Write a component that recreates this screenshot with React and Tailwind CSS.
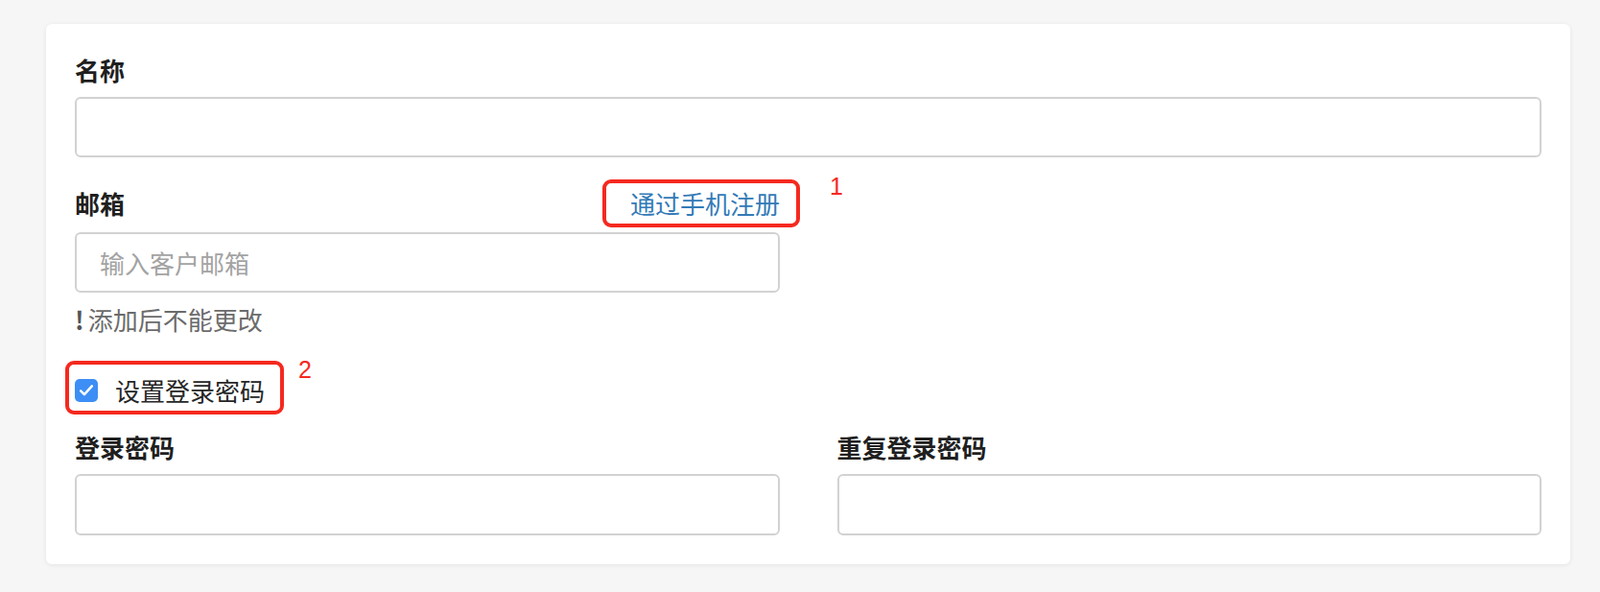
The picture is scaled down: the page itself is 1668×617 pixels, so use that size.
import React, { useState } from 'react';

const inputCls = 'block w-full h-[63px] rounded-md border-2 border-[#d2d2d2] bg-white px-[24px] text-[26px] text-[#222] outline-none placeholder:text-[#a3a3a3]';
const labelCls = 'text-[26px] leading-[36px] font-bold text-[#1f1f1f]';

const Mark = ({ n, className }) => (
    <span className={`absolute text-[25px] leading-none text-[#f5291f] font-['Liberation_Sans',sans-serif] ${className}`}>
        {n}
    </span>
);

const App = () => {
    const [setPassword, setSetPassword] = useState(true);

    return (
        <div className="min-h-screen bg-[#f6f6f6] pl-[48px] pr-[31px] pt-[25px] pb-[30px] font-['Noto_Sans_CJK_SC',sans-serif]">
            <div className="bg-white rounded-md shadow-[0_1px_5px_rgba(0,0,0,0.08)] p-[30px]">
                {/* 名称 */}
                <div className={`${labelCls} mb-[10px]`}>名称</div>
                <input className={inputCls} />

                {/* 邮箱 */}
                <div className="mt-[30px] w-[735px]">
                    <div className="flex justify-between mb-[12px]">
                        <span className={labelCls}>邮箱</span>
                        <span className="relative text-[26px] leading-[36px] text-[#337ab7] cursor-pointer">
                            通过手机注册
                            <span className="absolute -left-[29px] -right-[21px] -top-[7px] -bottom-[7px] border-[4.5px] border-[#f5291f] rounded-[9px]" />
                            <Mark n="1" className="left-[calc(100%+52px)] -top-[12px]" />
                        </span>
                    </div>
                    <input className={`${inputCls} h-[62px]`} placeholder="输入客户邮箱" />
                    <div className="mt-[10px] text-[26px] leading-[36px] text-[#6b6b6b]">
                        <span className="font-bold text-[#555] mr-[4px]">!</span>添加后不能更改
                    </div>
                </div>

                {/* 设置登录密码 */}
                <div className="mt-[38px]">
                    <label className="relative inline-flex items-center h-[36px] cursor-pointer" onClick={() => setSetPassword(!setPassword)}>
                        <span className={`w-[24px] h-[24px] rounded-[5px] flex items-center justify-center ${setPassword ? 'bg-[#3d8ef5]' : 'bg-white border-2 border-[#bbb]'}`}>
                            {setPassword && (
                                <svg viewBox="0 0 24 24" className="w-[20px] h-[20px]" fill="none" stroke="white" strokeWidth="3" strokeLinecap="round" strokeLinejoin="round">
                                    <path d="M5 12.5l4.5 4.5L19 6.5" />
                                </svg>
                            )}
                        </span>
                        <span className="ml-[18px] text-[26px] leading-[36px] text-[#262626]">设置登录密码</span>
                        <span className="absolute -left-[10px] -right-[20px] -top-[13px] -bottom-[7px] border-[4.5px] border-[#f5291f] rounded-[9px] pointer-events-none" />
                        <Mark n="2" className="left-[calc(100%+35px)] -top-[16px]" />
                    </label>
                </div>

                {/* 密码 */}
                {setPassword && (
                    <div className="mt-[23px] grid grid-cols-2 gap-x-[60px]">
                        <div>
                            <div className={`${labelCls} mb-[10px]`}>登录密码</div>
                            <input type="password" className={`${inputCls} h-[64px]`} />
                        </div>
                        <div>
                            <div className={`${labelCls} mb-[10px]`}>重复登录密码</div>
                            <input type="password" className={`${inputCls} h-[64px]`} />
                        </div>
                    </div>
                )}
            </div>
        </div>
    );
};

export default App;
